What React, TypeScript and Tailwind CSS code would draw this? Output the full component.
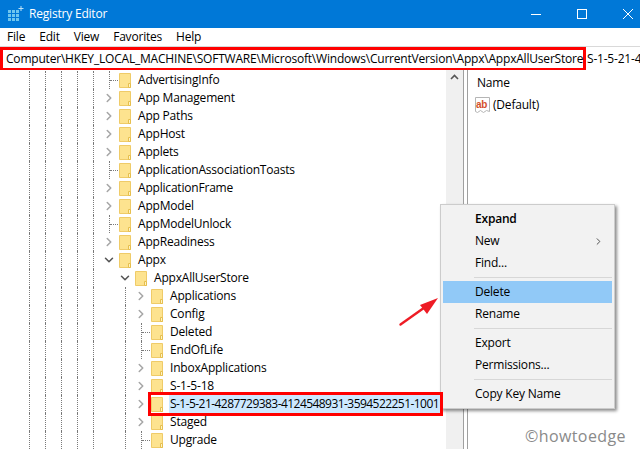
import { ChevronDown, ChevronRight } from "lucide-react";

const font = "font-['Open_Sans','Noto_Sans',sans-serif]";

type Kind = "closed" | "open" | "leaf";
type Row = { name: string; level: 1 | 2 | 3; kind: Kind; selected?: boolean };

const rows: Row[] = [
  { name: "AdvertisingInfo", level: 1, kind: "leaf" },
  { name: "App Management", level: 1, kind: "closed" },
  { name: "App Paths", level: 1, kind: "closed" },
  { name: "AppHost", level: 1, kind: "closed" },
  { name: "Applets", level: 1, kind: "closed" },
  { name: "ApplicationAssociationToasts", level: 1, kind: "leaf" },
  { name: "ApplicationFrame", level: 1, kind: "closed" },
  { name: "AppModel", level: 1, kind: "closed" },
  { name: "AppModelUnlock", level: 1, kind: "leaf" },
  { name: "AppReadiness", level: 1, kind: "closed" },
  { name: "Appx", level: 1, kind: "open" },
  { name: "AppxAllUserStore", level: 2, kind: "open" },
  { name: "Applications", level: 3, kind: "closed" },
  { name: "Config", level: 3, kind: "closed" },
  { name: "Deleted", level: 3, kind: "leaf" },
  { name: "EndOfLife", level: 3, kind: "leaf" },
  { name: "InboxApplications", level: 3, kind: "closed" },
  { name: "S-1-5-18", level: 3, kind: "closed" },
  { name: "S-1-5-21-4287729383-4124548931-3594522251-1001", level: 3, kind: "closed", selected: true },
  { name: "Staged", level: 3, kind: "closed" },
  { name: "Upgrade", level: 3, kind: "leaf" },
];

function Folder() {
  return (
    <svg width="12" height="15" viewBox="0 0 12 15" className="shrink-0">
      <path d="M.5.500h11v14H.5z" fill="#fde38f" stroke="#efcb68" />
      <path d="M9.500 10.500h2v4h-2z" fill="#fff3c4" stroke="#e6bf4e" />
    </svg>
  );
}

function Guide() {
  return <div className="w-4 h-full shrink-0 border-l border-dotted border-[#7a7a7a]" />;
}

function Twisty({ kind }: { kind: Kind }) {
  if (kind === "closed") return <ChevronRight size={14} strokeWidth={2.6} className="text-[#a6a6a6] -ml-[7px] shrink-0" />;
  if (kind === "open") return <ChevronDown size={14} strokeWidth={2.6} className="text-[#555555] -ml-[7px] shrink-0" />;
  return <div className="w-2 border-t border-dotted border-[#7a7a7a] self-center" />;
}

function TreeRow({ row }: { row: Row }) {
  return (
    <div className="flex items-center h-[18px] pl-[29px]">
      <Guide />
      <Guide />
      <Guide />
      <Guide />
      <Guide />
      {row.level > 1 && <div className="w-4 h-full shrink-0" />}
      {row.level > 2 && <Guide />}
      <div className={`w-[10px] h-full flex items-center shrink-0 ${row.kind === "leaf" ? "border-l border-dotted border-[#7a7a7a]" : ""}`}>
        <Twisty kind={row.kind} />
      </div>
      <div
        className={`flex items-center shrink-0 ${row.selected ? "relative z-10 outline-[3px] outline-[#ff0000] bg-white" : ""}`}
      >
        <Folder />
        <span className={`ml-[6px] px-px whitespace-nowrap ${row.selected ? "bg-[#cce8ff] tracking-[-0.55px]" : ""}`}>{row.name}</span>
      </div>
    </div>
  );
}

function MenuItem({ label, bold, active, arrow }: { label: string; bold?: boolean; active?: boolean; arrow?: boolean }) {
  return (
    <div className={`h-[22px] pl-[32px] pr-2 flex items-center justify-between ${bold ? "font-semibold" : ""} ${active ? "bg-[#91c9f7]" : ""}`}>
      {label}
      {arrow && <ChevronRight size={11} strokeWidth={2} className="text-[#444444]" />}
    </div>
  );
}

function Sep() {
  return <div className="h-[1px] my-[3px] ml-[31px] bg-[#d7d7d7]" />;
}

export default function App() {
  return (
    <div className={`relative w-[640px] h-[449px] overflow-hidden bg-white text-[12px] tracking-[-0.2px] text-black ${font}`}>
      <div className="h-[28px] bg-[#0078d7] flex items-center text-white">
        <svg width="16" height="16" viewBox="0 0 16 16" className="ml-[8px] mr-[5px]">
          <g fill="#6fc6ee">
            <rect x="0" y="4" width="3" height="3" /><rect x="4" y="4" width="3" height="3" /><rect x="8" y="4" width="3" height="3" />
            <rect x="0" y="8" width="3" height="3" /><rect x="4" y="8" width="3" height="3" /><rect x="8" y="8" width="3" height="3" />
            <rect x="0" y="12" width="3" height="3" /><rect x="4" y="12" width="3" height="3" /><rect x="8" y="12" width="3" height="3" />
          </g>
          <path d="M13 0v5M10.500 2.500h5" stroke="#bfe2f7" />
        </svg>
        <span>Registry Editor</span>
        <div className="ml-auto -mr-[11px] flex items-center">
          <div className="w-[46px] flex justify-center"><div className="w-[10px] h-px bg-white" /></div>
          <div className="w-[46px] flex justify-center"><div className="w-[10px] h-[10px] border border-white" /></div>
          <div className="w-[46px] flex justify-center">
            <svg width="10" height="10" viewBox="0 0 10 10"><path d="M0 0l10 10M10 0L0 10" stroke="#fff" /></svg>
          </div>
        </div>
      </div>
      <div className="h-[18px] flex items-center gap-[14px] pl-[7px]">
        <span>File</span><span>Edit</span><span>View</span><span>Favorites</span><span>Help</span>
      </div>
      <div className="h-[24px] flex items-center whitespace-nowrap overflow-hidden border-t border-[#d9d9d9]">
        <div className="h-[24px] w-[586px] shrink-0 border-[3px] border-[#ff0000] pl-[3px] flex items-center">
          Computer\HKEY_LOCAL_MACHINE\SOFTWARE\Microsoft\Windows\CurrentVersion\Appx\AppxAllUserStore
        </div>
        <span className="ml-[1px]">S-1-5-21-4287729383</span>
      </div>
      <div className="flex h-[379px]">
        <div className="w-[446px] overflow-hidden pt-[1px]">
          {rows.map((row) => (
            <TreeRow key={row.name} row={row} />
          ))}
        </div>
        <div className="w-[17px] bg-[#f0f0f0] flex justify-center pt-[4px]">
          <svg width="9" height="6" viewBox="0 0 9 6"><path d="M1 5l3.500-3.500L8 5" fill="none" stroke="#555" strokeWidth="1.6" /></svg>
        </div>
        <div className="w-[5px] border-x border-[#a0a0a0]" />
        <div className="flex-1 pl-[9px] pt-[4px]">
          <div>Name</div>
          <div className="flex items-center mt-[4px] -ml-[2px]">
            <svg width="16" height="17" viewBox="0 0 16 17">
              <path d="M.5.500h14v14l-3-1-3 2-3-2-3 2-2-1z" fill="#fff" stroke="#b5b5b5" />
              <rect x="1" y="3" width="13" height="9" fill="#fff" />
              <text x="1" y="11" fontSize="10" fontWeight="700" fill="#d4502c" fontFamily="Liberation Sans">ab</text>
            </svg>
            <span className="ml-[2px]">(Default)</span>
          </div>
        </div>
      </div>

      {/* context menu */}
      <div className="absolute left-[440px] top-[204px] w-[175px] bg-[#f2f2f2] border border-[#cccccc] px-[2px] py-[3px] shadow-[2px_2px_3px_rgba(0,0,0,0.45)]">
        <MenuItem label="Expand" bold />
        <MenuItem label="New" arrow />
        <MenuItem label="Find..." />
        <Sep />
        <MenuItem label="Delete" active />
        <MenuItem label="Rename" />
        <Sep />
        <MenuItem label="Export" />
        <MenuItem label="Permissions..." />
        <Sep />
        <MenuItem label="Copy Key Name" />
      </div>

      {/* red arrow */}
      <svg width="50" height="40" viewBox="0 0 50 40" className="absolute left-[396px] top-[292px]">
        <path d="M4.500 32.500L32 13" stroke="#ee1c25" strokeWidth="2.400" strokeLinecap="round" />
        <path d="M42 6L24 13l7 9z" fill="#ee1c25" />
      </svg>

      <div className="absolute left-[525px] top-[424px] text-[16px] text-[#8a8a8a] tracking-[0.4px]">©howtoedge</div>
    </div>
  );
}
